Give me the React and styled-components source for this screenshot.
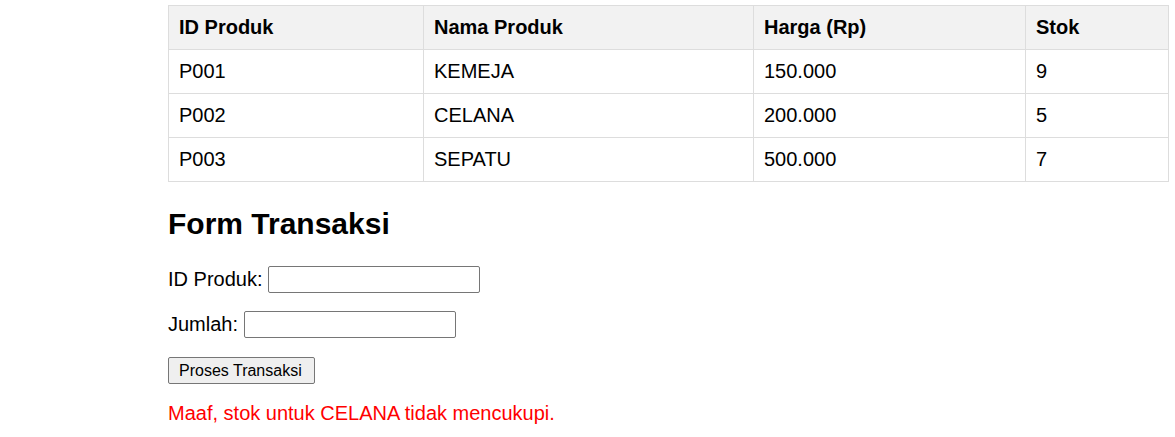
import React from "react";
import styled, { createGlobalStyle } from "styled-components";

const products = [
  { id: "P001", name: "KEMEJA", price: "150.000", stock: 9 },
  { id: "P002", name: "CELANA", price: "200.000", stock: 5 },
  { id: "P003", name: "SEPATU", price: "500.000", stock: 7 },
];

const columns = [
  { label: "ID Produk", width: 255 },
  { label: "Nama Produk", width: 330 },
  { label: "Harga (Rp)", width: 272 },
  { label: "Stok", width: 143 },
];

const GlobalStyle = createGlobalStyle`
  body {
    margin: 0;
    background: #fff;
    font-family: "Liberation Sans", Arial, sans-serif;
    font-size: 20px;
    color: #000;
  }
`;

const Page = styled.div`
  padding: 5px 7px 0 168px;
`;

const Table = styled.table`
  width: 1000px;
  border-collapse: collapse;
  table-layout: fixed;
`;

const Th = styled.th`
  border: 1px solid #ddd;
  background: #f2f2f2;
  padding: 10px;
  text-align: left;
  font-weight: bold;
  line-height: 23px;
`;

const Td = styled.td`
  border: 1px solid #ddd;
  padding: 10px;
  text-align: left;
  line-height: 23px;
`;

const Title = styled.h2`
  font-size: 30px;
  font-weight: bold;
  margin: 25px 0 25px;
  line-height: 34px;
`;

const Form = styled.form`
  display: flex;
  flex-direction: column;
  align-items: flex-start;
`;

const Field = styled.div`
  display: flex;
  align-items: center;
  gap: 6px;
  height: 27px;
  margin-bottom: 18px;
`;

const Input = styled.input`
  box-sizing: border-box;
  width: 212px;
  height: 27px;
  border: 1px solid #767676;
  border-radius: 2px;
  padding: 1px 2px;
  font-size: 16px;
  background: #fff;
`;

const Button = styled.button`
  box-sizing: border-box;
  height: 27px;
  margin-top: 1px;
  padding: 0 12px 0 10px;
  font-family: "Liberation Sans", Arial, sans-serif;
  font-size: 16px;
  color: #000;
  background: #efefef;
  border: 1px solid #767676;
  border-radius: 2px;
`;

const Message = styled.p`
  margin: 18px 0 0;
  color: #ff0000;
  line-height: 23px;
`;

export default function App() {
  return (
    <Page>
      <GlobalStyle />
      <Table>
        <colgroup>
          {columns.map((c) => (
            <col key={c.label} style={{ width: c.width }} />
          ))}
        </colgroup>
        <thead>
          <tr>
            {columns.map((c) => (
              <Th key={c.label}>{c.label}</Th>
            ))}
          </tr>
        </thead>
        <tbody>
          {products.map((p) => (
            <tr key={p.id}>
              <Td>{p.id}</Td>
              <Td>{p.name}</Td>
              <Td>{p.price}</Td>
              <Td>{p.stock}</Td>
            </tr>
          ))}
        </tbody>
      </Table>

      <Title>Form Transaksi</Title>
      <Form onSubmit={(e) => e.preventDefault()}>
        <Field>
          ID Produk: <Input type="text" />
        </Field>
        <Field>
          Jumlah: <Input type="number" />
        </Field>
        <Button type="submit">Proses Transaksi</Button>
        <Message>Maaf, stok untuk CELANA tidak mencukupi.</Message>
      </Form>
    </Page>
  );
}
